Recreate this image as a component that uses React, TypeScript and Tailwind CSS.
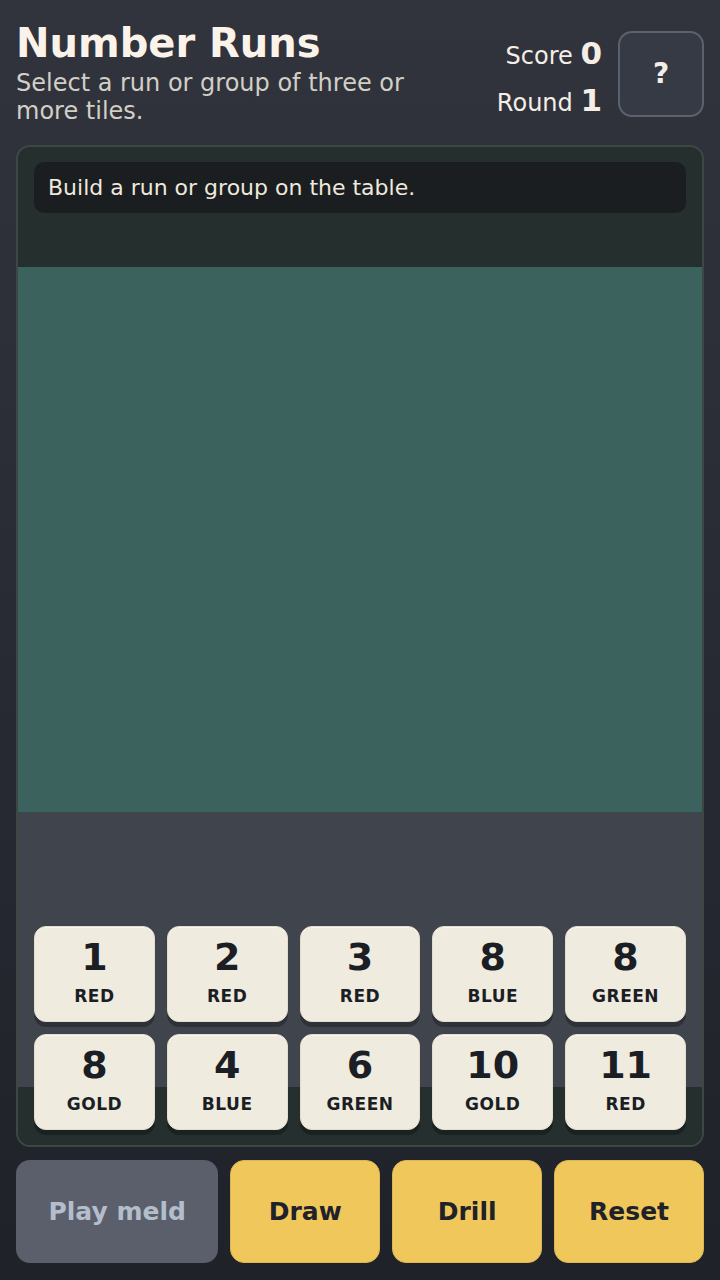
import * as React from "react";

interface Tile {
  value: number;
  color: string;
}

const hand: Tile[] = [
  { value: 1, color: "RED" },
  { value: 2, color: "RED" },
  { value: 3, color: "RED" },
  { value: 8, color: "BLUE" },
  { value: 8, color: "GREEN" },
  { value: 8, color: "GOLD" },
  { value: 4, color: "BLUE" },
  { value: 6, color: "GREEN" },
  { value: 10, color: "GOLD" },
  { value: 11, color: "RED" },
];

export default function App() {
  const [score] = React.useState(0);
  const [round] = React.useState(1);

  return (
    <div className="min-h-screen flex flex-col bg-gradient-to-b from-[#31343d] to-[#1f2229] px-4 pb-[17px] font-['DejaVu_Sans',sans-serif]">
      {/* Header */}
      <header className="flex items-start justify-between gap-4 pt-[19px]">
        <div className="min-w-0 max-w-[450px]">
          <h1 className="text-[40px] font-bold leading-[48px] text-[#fbf3ea]">Number Runs</h1>
          <p className="mt-[2px] text-[24px] leading-[28px] text-[#d2cfc6]">
            Select a run or group of three or more tiles.
          </p>
        </div>
        <div className="flex items-start gap-[16px] shrink-0">
          <div className="mt-[12px] text-right text-[24px] leading-[44px] text-[#f4eee6]">
            <div>
              Score <span className="text-[31px] font-bold">{score}</span>
            </div>
            <div>
              Round <span className="text-[31px] font-bold">{round}</span>
            </div>
          </div>
          <button className="mt-[12px] flex h-[86px] w-[86px] items-center justify-center rounded-[14px] border-2 border-[#5b616d] bg-[#353a45] text-[28px] font-bold text-[#f4efe6]">
            ?
          </button>
        </div>
      </header>

      {/* Table */}
      <main className="mt-[20px] flex flex-1 flex-col overflow-hidden rounded-[14px] border-2 border-[#3d4845] bg-[#252f2e]">
        <div className="px-4 pt-[15px] pb-[54px]">
          <div className="flex h-[51px] items-center rounded-[10px] bg-[#1a1e21] px-[14px] text-[22px] text-[#efe8dc]">
            Build a run or group on the table.
          </div>
        </div>

        <div className="flex-1 bg-[#3c625e]" />

        {/* Hand */}
        <div className="bg-[linear-gradient(to_bottom,#40444d_0,#40444d_275px,#252f2e_275px)] px-4 pt-[114px] pb-[15px]">
          <div className="grid grid-cols-5 gap-3">
            {hand.map((tile, i) => (
              <button
                key={i}
                className="flex h-[96px] flex-col items-center rounded-[12px] border border-[#e3ddcf] bg-[#f0ebdf] pt-[8px] text-[#1b1e24] shadow-[0_5px_0_rgba(0,0,0,0.28),inset_0_1px_0_rgba(255,255,255,0.6)]"
              >
                <span className="text-[38px] font-bold leading-[44px]">{tile.value}</span>
                <span className="mt-[7px] text-[17px] font-bold leading-[20px] tracking-[0.03em]">
                  {tile.color}
                </span>
              </button>
            ))}
          </div>
        </div>
      </main>

      {/* Actions */}
      <div className="mt-[13px] grid h-[103px] grid-cols-[1.35fr_1fr_1fr_1fr] gap-3">
        <button className="rounded-[14px] bg-[#5a5f6b] text-[25px] font-bold text-[#b3bdcc]">Play meld</button>
        <button className="rounded-[14px] border border-[#dcb652] bg-[#f0c75a] text-[25px] font-bold text-[#1f2229]">
          Draw
        </button>
        <button className="rounded-[14px] border border-[#dcb652] bg-[#f0c75a] text-[25px] font-bold text-[#1f2229]">
          Drill
        </button>
        <button className="rounded-[14px] border border-[#dcb652] bg-[#f0c75a] text-[25px] font-bold text-[#1f2229]">
          Reset
        </button>
      </div>
    </div>
  );
}
